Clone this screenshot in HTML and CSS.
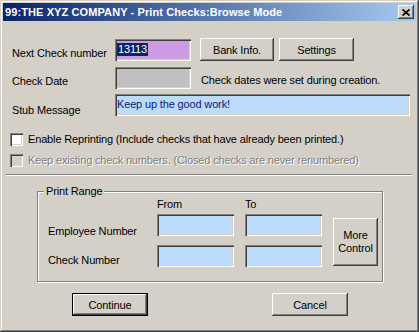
FILE: index.html
```
<!DOCTYPE html>
<html lang="en">
<head>
    <meta charset="UTF-8" />
    <title>Print Checks:Browse Mode</title>
    <link rel="stylesheet" href="styles.css">
</head>
<body>
<div class="window">
    <div class="titlebar">
        <span class="title">99:THE XYZ COMPANY - Print Checks:Browse Mode</span>
        <span class="close-btn">
            <svg width="8" height="7" viewBox="0 0 8 7"><path d="M0.5 0.5 L7.5 6.5 M7.5 0.5 L0.5 6.5" stroke="#000" stroke-width="1.7" fill="none"/></svg>
        </span>
    </div>

    <div class="dlg-body">
        <div class="row row-first">
            <span class="lbl lbl-1">Next Check number</span>
            <div class="field field-next"><span class="sel">13113</span></div>
            <span class="btn btn-bank">Bank Info.</span>
            <span class="btn btn-settings">Settings</span>
        </div>
        <div class="row row-date">
            <span class="lbl lbl-2">Check Date</span>
            <div class="field field-date"></div>
            <span class="note">Check dates were set during creation.</span>
        </div>
        <div class="row row-stub">
            <span class="lbl lbl-3">Stub Message</span>
            <div class="field field-stub">Keep up the good work!</div>
        </div>

        <div class="check-row check-first">
            <span class="box"></span>
            <span>Enable Reprinting (Include checks that have already been printed.)</span>
        </div>
        <div class="check-row check-second disabled">
            <span class="box"></span>
            <span>Keep existing check numbers. (Closed checks are never renumbered)</span>
        </div>

        <div class="separator"></div>

        <div class="group">
            <span class="group-title">Print Range</span>
            <div class="group-inner">
                <div class="range-grid">
                    <span></span>
                    <span class="col-head">From</span>
                    <span class="col-head">To</span>
                    <span class="range-lbl lbl-emp">Employee Number</span>
                    <div class="field field-range"></div>
                    <div class="field field-range"></div>
                    <span class="range-lbl lbl-chk">Check Number</span>
                    <div class="field field-range"></div>
                    <div class="field field-range"></div>
                </div>
                <span class="btn btn-more">More<br>Control</span>
            </div>
        </div>

        <div class="footer">
            <span class="btn btn-default">Continue</span>
            <span class="btn btn-cancel">Cancel</span>
        </div>
    </div>
</div>
</body>
</html>
```
FILE: styles.css
```
html,
body {
    margin: 0;
    padding: 0;
    background: #d4d0c8;
}
.window {
    width: 419px;
    height: 332px;
    box-sizing: border-box;
    padding: 3px;
    background: #d4d0c8;
    box-shadow: inset -1px -1px #404040, inset 1px 1px #d4d0c8, inset -2px -2px #808080, inset 2px 2px #fff;
    font-family: "Liberation Sans", Arial, sans-serif;
    font-size: 11px;
    letter-spacing: -0.15px;
    color: #000;
    overflow: hidden;
}

/* title bar */
.titlebar {
    height: 18px;
    display: flex;
    align-items: center;
    justify-content: space-between;
    padding: 0 2px 0 2px;
    background: linear-gradient(to right, #0a246a, #a6caf0);
    color: #fff;
    font-weight: bold;
    font-size: 11px;
    letter-spacing: 0.1px;
}
.title {white-space: nowrap;}
.close-btn {
    width: 16px;
    height: 14px;
    display: flex;
    align-items: center;
    justify-content: center;
    background: #d4d0c8;
    box-shadow: inset -1px -1px #404040, inset 1px 1px #fff, inset -2px -2px #808080;
}

/* body */
.dlg-body {padding: 0 4px 0 3px;}
.row {display: flex; align-items: flex-start;}
.row-first {margin-top: 17px; height: 23px;}
.row-date {margin-top: 6px; height: 22px;}
.row-stub {margin-top: 5px; height: 22px;}
.lbl {width: 103px; margin-left: 6px; line-height: 14px; white-space: nowrap;}
.lbl-1 {padding-top: 8px;}
.lbl-2 {padding-top: 7px;}
.lbl-3 {padding-top: 9px;}

.field {
    box-sizing: border-box;
    height: 22px;
    padding: 3px 3px 0 2px;
    line-height: 14px;
    box-shadow: inset 1px 1px #808080, inset 2px 2px #404040, inset -1px -1px #fff, inset -2px -2px #d4d0c8;
    white-space: nowrap;
    overflow: hidden;
}
.field-next {width: 76px; margin-top: 1px; background: #cc9be4;}
.field-date {width: 76px; background: #c0c0c0;}
.field-stub {width: 295px; background: #bcdafc; color: #0c1c70;}
.field-range {width: 77px; background: #bcdafc;}
.sel {display: inline-block; background: #0a246a; color: #fff; padding: 0 1px; line-height: 13px;}
.note {margin-left: 10px; padding-top: 6px; line-height: 14px; white-space: nowrap;}

.btn {
    box-sizing: border-box;
    display: flex;
    align-items: center;
    justify-content: center;
    text-align: center;
    background: #d4d0c8;
    box-shadow: inset -1px -1px #404040, inset 1px 1px #fff, inset -2px -2px #808080, inset 2px 2px #d4d0c8;
    white-space: nowrap;
}
.btn-bank {width: 74px; height: 23px; margin-left: 9px;}
.btn-settings {width: 75px; height: 23px; margin-left: 5px;}

/* checkboxes */
.check-row {display: flex; align-items: center; gap: 5px; margin-left: 4px; line-height: 14px; white-space: nowrap;}
.check-first {margin-top: 16px;}
.check-second {margin-top: 7px;}
.box {
    width: 13px;
    height: 13px;
    box-sizing: border-box;
    background: #fff;
    box-shadow: inset 1px 1px #808080, inset 2px 2px #404040, inset -1px -1px #fff, inset -2px -2px #d4d0c8;
}
.disabled {color: #808080; text-shadow: 1px 1px #fff;}
.disabled .box {background: #d4d0c8;}

.separator {margin: 7px 0 0 0; height: 0; border-top: 1px solid #808080; border-bottom: 1px solid #fff;}

/* print range group */
.group {
    margin: 15px 0 0 31px;
    width: 346px;
    height: 91px;
    box-sizing: border-box;
    border: 1px solid #808080;
    box-shadow: 1px 1px 0 #fff, inset 1px 1px 0 #fff;
}
.group-title {
    display: block;
    width: fit-content;
    margin: -8px 0 0 6px;
    padding: 0 2px;
    line-height: 14px;
    background: #d4d0c8;
}
.group-inner {display: flex; align-items: flex-start; padding-left: 10px; margin-top: -1px;}
.range-grid {
    display: grid;
    grid-template-columns: 98px 77px 77px;
    grid-template-rows: 17px 31px 22px;
    column-gap: 11px;
    align-items: start;
    line-height: 14px;
}
.range-lbl {white-space: nowrap;}
.lbl-emp {padding-top: 10px;}
.lbl-chk {padding-top: 8px;}
.btn-more {width: 45px; height: 48px; margin: 21px 0 0 11px; line-height: 13px;}

/* footer */
.footer {display: flex; margin: 11px 0 0 66px; gap: 124px;}
.btn-default {width: 76px; height: 23px; border: 1px solid #000;}
.btn-cancel {width: 76px; height: 23px;}
```
